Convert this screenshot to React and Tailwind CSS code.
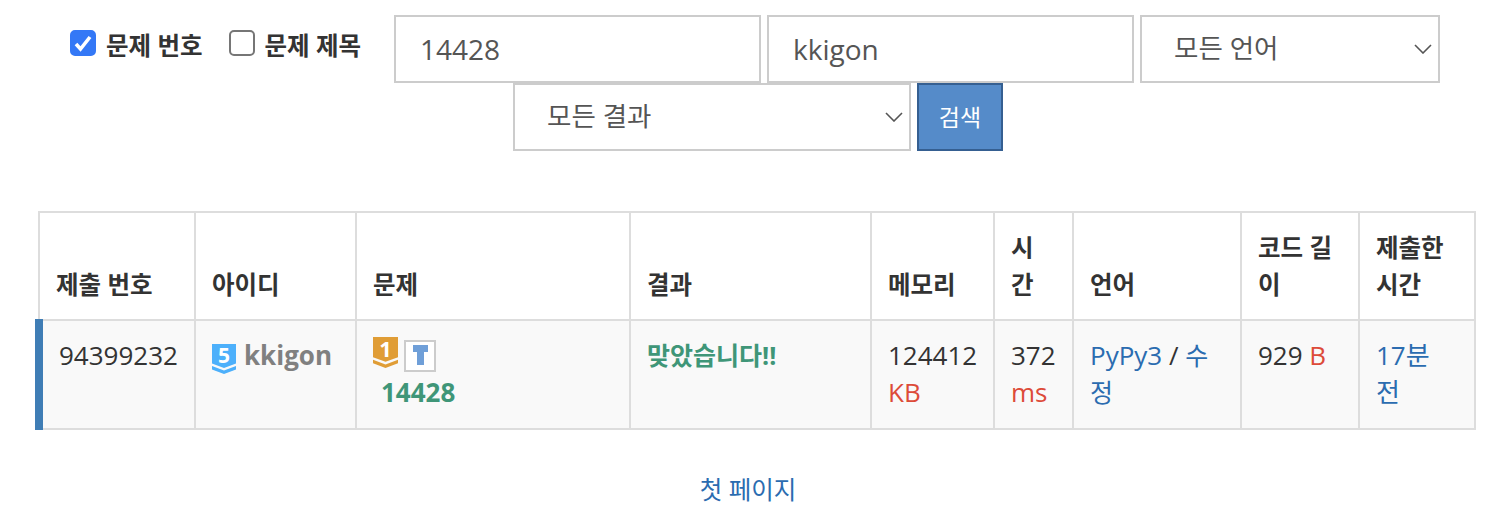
const COLS = [156, 161, 274, 241, 123, 79, 168, 118, 116];
const HEADERS = ['제출 번호', '아이디', '문제', '결과', '메모리', <>시<br />간</>, '언어', '코드 길이', '제출한 시간'];
const CELL = 'border-2 border-[#ddd] px-[16px] pt-[16px] pb-[17px]';

function Tier({ color, label, w, h }) {
  return (
    <svg width={w} height={h} viewBox="0 0 24 30" preserveAspectRatio="none" className="shrink-0 overflow-visible">
      <path d="M0 0H24V19.5L12 24L0 19.5Z" fill={color} />
      <path d="M0 22L12 26.5L24 22V25.5L12 30L0 25.5Z" fill={color} />
      <text x="12" y="19" textAnchor="middle" fontSize="21" fontWeight="700" fill="#fff" fontFamily="'Open Sans', sans-serif">{label}</text>
    </svg>
  );
}

function Select({ label, className }) {
  return (
    <div className={`relative h-[68px] ${className}`}>
      <select className="w-full h-full appearance-none bg-white border-2 border-[#ccc] pl-[32px] pb-[2px] text-[26.5px] text-[#555]">
        <option>{label}</option>
      </select>
      <svg width="18" height="10" viewBox="0 0 18 10" className="absolute right-[8px] top-[29px] pointer-events-none">
        <path d="M1 1L9 9L17 1" fill="none" stroke="#555" strokeWidth="1.6" />
      </svg>
    </div>
  );
}

function Check({ label, checked }) {
  return (
    <label className="flex items-start gap-[10px] text-[24.5px] font-bold text-[#333]">
      <span className="relative w-[26px] h-[26px]">
        <input type="checkbox" defaultChecked={checked} className="block w-[26px] h-[26px] appearance-none rounded-[5px] border-2 border-[#767676] bg-white checked:bg-[#3478f6] checked:border-[#3478f6]" />
        {checked && (
          <svg width="26" height="26" viewBox="0 0 26 26" className="absolute left-0 top-0 pointer-events-none">
            <path d="M6 14L10.5 19L20 7" fill="none" stroke="#fff" strokeWidth="3.6" />
          </svg>
        )}
      </span>
      <span className="-mt-[3px]">{label}</span>
    </label>
  );
}

export default function App() {
  return (
    <div className="w-[1486px] h-[522px] bg-white overflow-hidden text-[26px] leading-[37px] text-[#333] font-['Open_Sans','Noto_Sans_CJK_KR',sans-serif]">
      <div className="pt-[15px] flex flex-col items-center">
        <div className="flex items-start pl-[24px]">
          <div className="flex gap-[26px] pt-[15px] mr-[33px]">
            <Check label="문제 번호" checked />
            <Check label="문제 제목" />
          </div>
          <input readOnly value="14428" className="w-[367px] h-[68px] border-2 border-[#ccc] px-[24px] text-[28px] text-[#555] mr-[6px]" />
          <input readOnly value="kkigon" className="w-[367px] h-[68px] border-2 border-[#ccc] px-[24px] text-[28px] text-[#555] mr-[6px]" />
          <Select label="모든 언어" className="w-[300px]" />
        </div>
        <div className="flex pl-[30px]">
          <Select label="모든 결과" className="w-[398px] mr-[6px]" />
          <button className="w-[86px] h-[68px] bg-[#558bc9] border-2 border-[#355f91] text-white text-[23px]">검색</button>
        </div>
      </div>

      <table className="table-fixed border-collapse w-[1434px] ml-[35px] mt-[60px]">
        <colgroup>
          {COLS.map((w, i) => <col key={i} style={{ width: w }} />)}
        </colgroup>
        <thead>
          <tr>
            {HEADERS.map((h, i) => (
              <th key={i} className="border-2 border-[#ddd] px-[16px] py-[16px] align-bottom text-left font-bold text-[24.5px]">{h}</th>
            ))}
          </tr>
        </thead>
        <tbody>
          <tr className="bg-[#f9f9f9] align-top">
            <td className={`${CELL} border-l-8 border-l-[#3f7db5]`}>94399232</td>
            <td className={CELL}>
              <span className="flex items-start gap-[8px] font-bold text-[#808080] h-[37px]">
                <span className="mt-[7px]"><Tier color="#4db0fb" label="5" w={24} h={30} /></span>
                kkigon
              </span>
            </td>
            <td className={CELL}>
              <span className="flex items-start gap-[6px] h-[37px]">
                <Tier color="#e09d36" label="1" w={25} h={31} />
                <svg width="32" height="32" viewBox="0 0 32 32" className="mt-[3px]">
                  <rect x="1" y="1" width="30" height="30" fill="#fff" stroke="#ccc" strokeWidth="2" />
                  <path d="M9 5H24V12H20V25H13V12H9Z" fill="#6f9fd8" />
                </svg>
              </span>
              <span className="block pl-[8px] font-bold text-[#3f9678]">14428</span>
            </td>
            <td className={`${CELL} font-bold text-[#3f9678] text-[25px]`}>맞았습니다!!</td>
            <td className={CELL}>124412 <span className="text-[#dd4b39]">KB</span></td>
            <td className={CELL}>372 <span className="text-[#dd4b39]">ms</span></td>
            <td className={CELL}><span className="text-[#2b6cb0]">PyPy3</span> / <span className="text-[#2b6cb0] text-[25px]">수정</span></td>
            <td className={CELL}>929 <span className="text-[#dd4b39]">B</span></td>
            <td className={`${CELL} text-[#2b6cb0]`}>17분<br />전</td>
          </tr>
        </tbody>
      </table>

      <div className="mt-[41px] pl-[10px] text-center text-[24.5px] text-[#2b6cb0]">첫 페이지</div>
    </div>
  );
}
